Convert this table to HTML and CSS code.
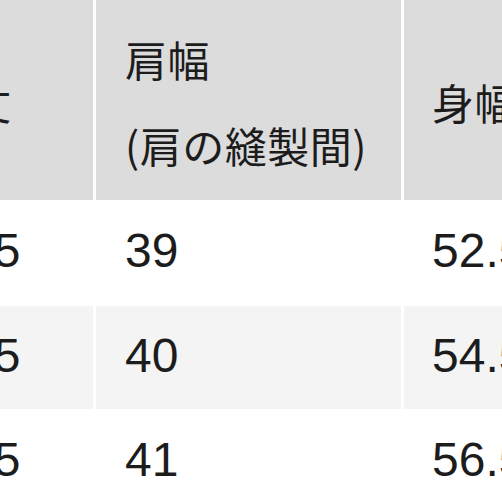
FILE: index.html
```html
<!DOCTYPE html>
<html lang="ja">
<head>
<meta charset="utf-8">
<link rel="stylesheet" href="styles.css">
</head>
<body>
<div class="size-table">
  <div class="cell head"><span class="jp">着丈</span></div>
  <div class="cell head"><span class="jp">肩幅<br>(肩の縫製間)</span></div>
  <div class="cell head last"><span class="jp">身幅</span></div>

  <div class="cell"><span class="num">66.5</span></div>
  <div class="cell"><span class="num">39</span></div>
  <div class="cell last"><span class="num">52.5</span></div>

  <div class="cell alt"><span class="num">68.5</span></div>
  <div class="cell alt"><span class="num">40</span></div>
  <div class="cell alt last"><span class="num">54.5</span></div>

  <div class="cell"><span class="num">70.5</span></div>
  <div class="cell"><span class="num">41</span></div>
  <div class="cell last"><span class="num">56.5</span></div>
</div>
</body>
</html>
```
FILE: styles.css
```css
html, body {
  margin: 0;
  padding: 0;
  background: #ffffff;
  overflow: hidden;
}

.size-table {
  display: grid;
  grid-template-columns: 195px 305px 300px;
  grid-template-rows: 200px 106px 103px 105px;
  column-gap: 3px;
  margin-left: -102px;
  width: 806px;
  color: #1c1c1c;
}

.cell {
  display: flex;
  align-items: center;
  padding-left: 29px;
  padding-bottom: 4px;
  background: #ffffff;
}

.cell.last {
  padding-left: 28px;
}

.head {
  background: #dcdcdc;
  padding-bottom: 0;
  padding-top: 4px;
}

.alt {
  background: #f4f4f4;
}

.jp {
  font-family: "Noto Sans CJK JP", "Liberation Sans", sans-serif;
  font-size: 42px;
  line-height: 86px;
  letter-spacing: 0.5px;
  white-space: nowrap;
}

.num {
  font-family: "Liberation Sans", Arial, sans-serif;
  font-size: 48px;
  line-height: 56px;
  white-space: nowrap;
}
```
